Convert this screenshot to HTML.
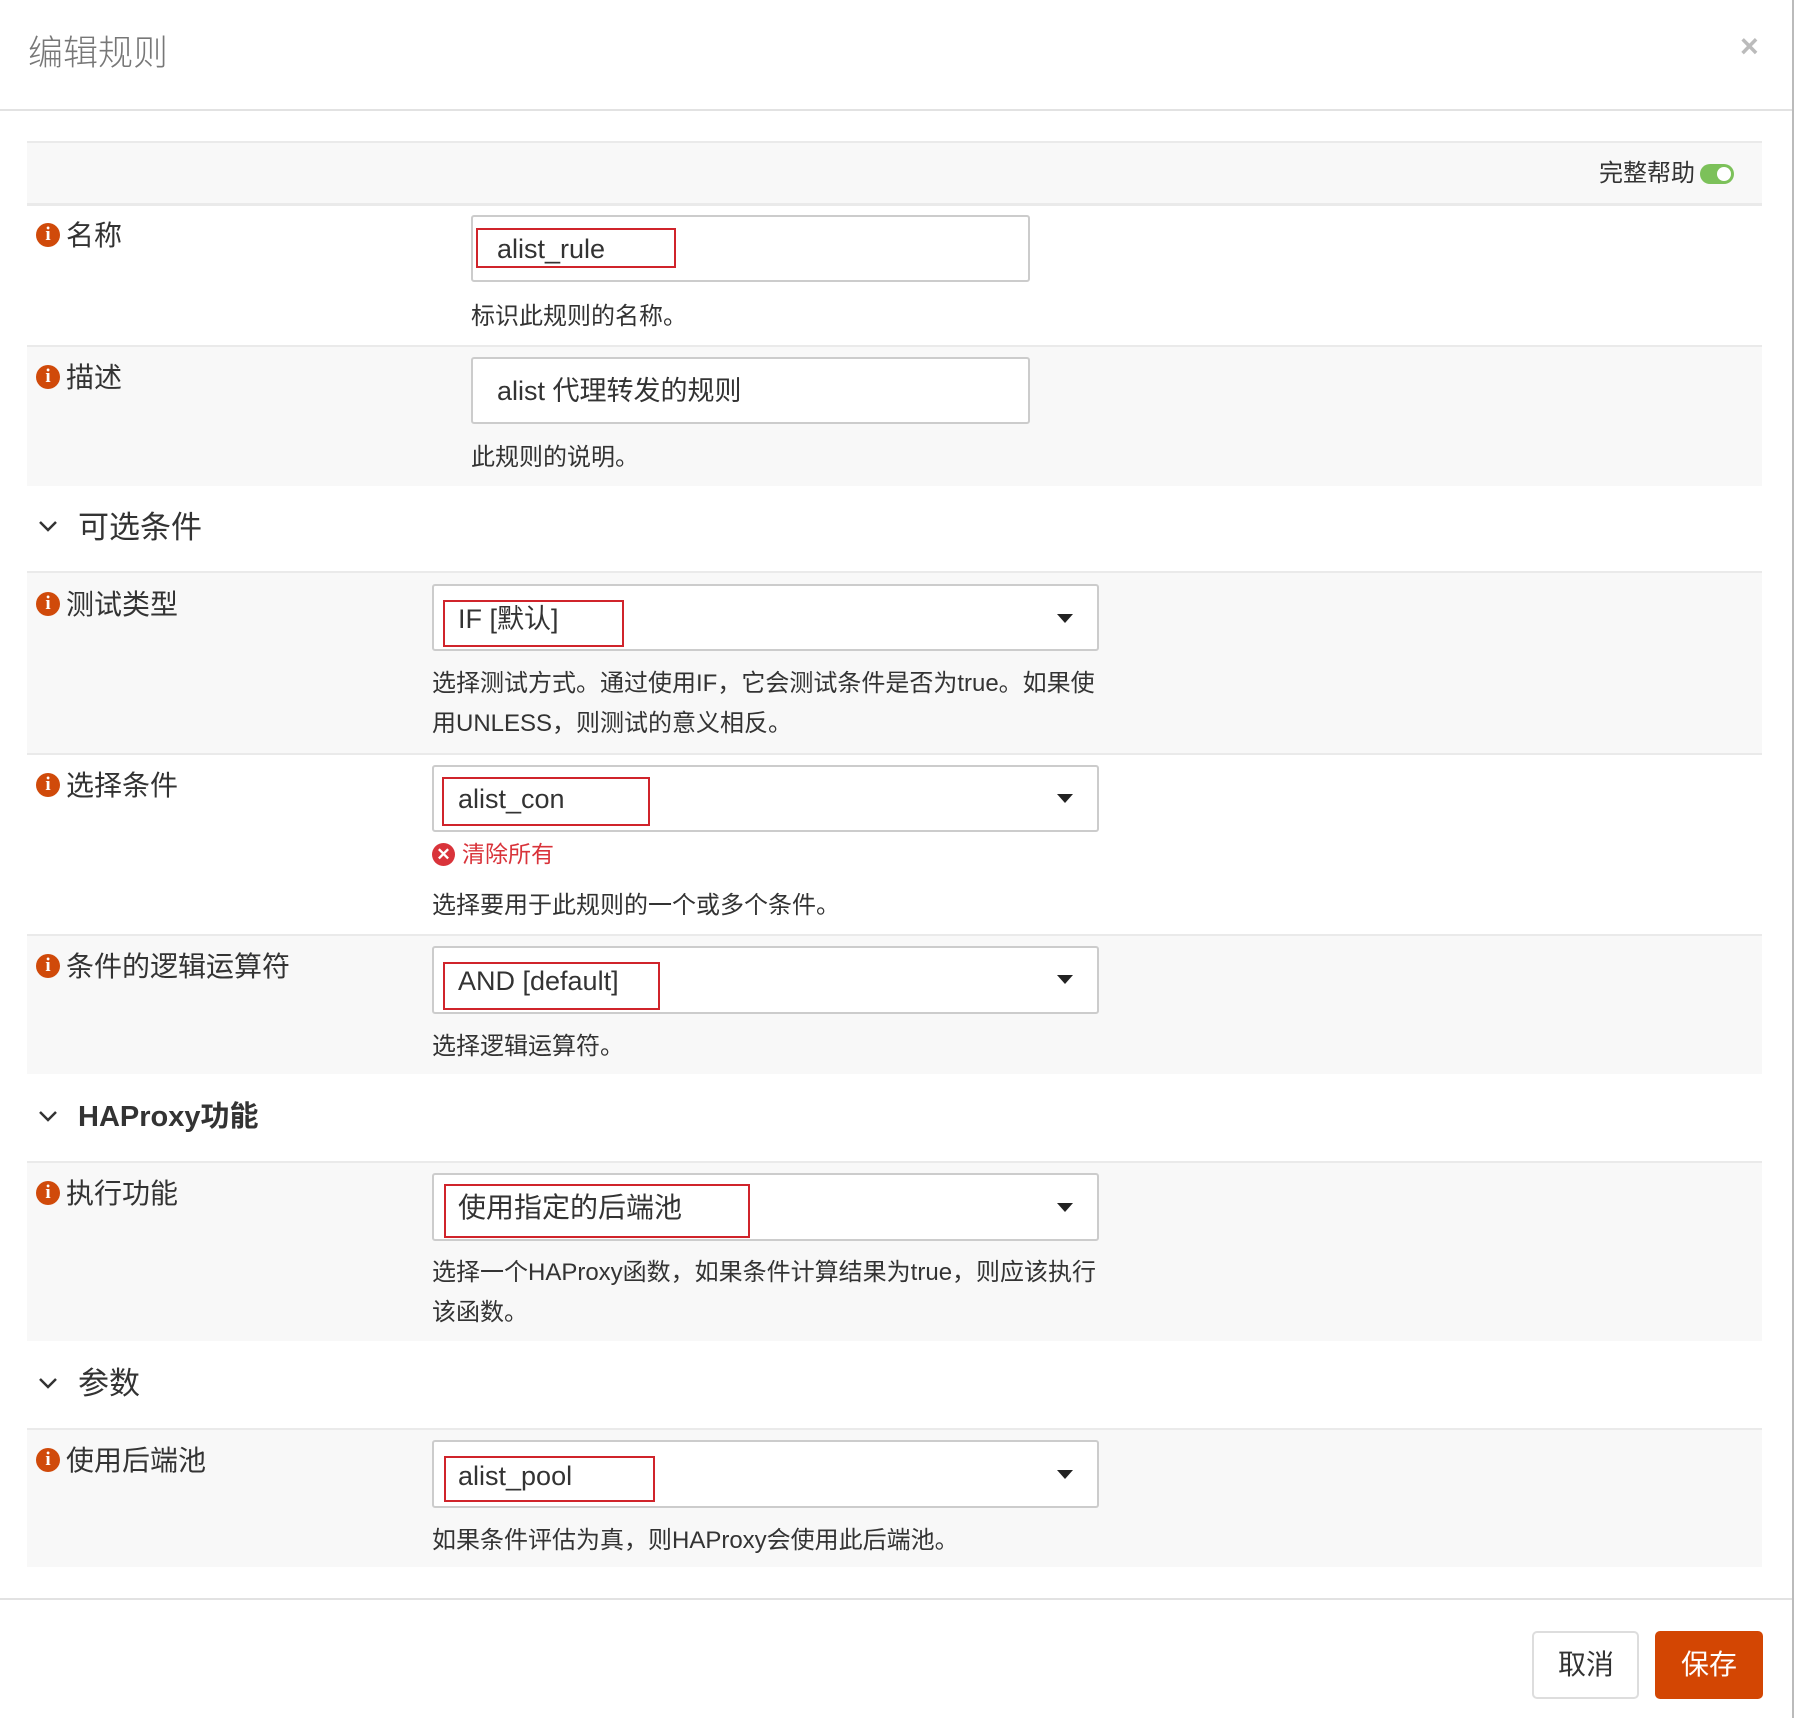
<!DOCTYPE html>
<html><head><meta charset="utf-8"><style>
*{margin:0;padding:0;box-sizing:border-box}
body{width:1794px;height:1718px;background:#fff;position:relative;overflow:hidden;font-family:"Liberation Sans","Noto Sans CJK SC",sans-serif;color:#333}
.a{position:absolute}
.t{position:absolute;white-space:nowrap;line-height:1}
.row{position:absolute;left:27px;width:1735px;border-top:2px solid #eaeaea}
.g{background:#f8f8f8}
.info{position:absolute;left:36px;width:24px;height:24px;border-radius:50%;background:#d04a0a;color:#fff;font:bold 19px/24px "Liberation Serif",serif;text-align:center}
.lbl{font-size:28px}
.help{font-size:24px}
.inp{position:absolute;background:#fff;border:2px solid #ccc;border-radius:3px}
.red{position:absolute;border:2px solid #d0242b}
.caret{position:absolute;width:0;height:0;border-left:8px solid transparent;border-right:8px solid transparent;border-top:9px solid #222}
.sec{font-size:31px}
.chev{position:absolute;left:38px}
</style></head><body>
<div class="a" style="left:1792px;top:0;width:2px;height:1718px;background:#bbb"></div>
<div class="t" style="left:28px;top:36px;font-size:35px;color:#777;font-weight:300">编辑规则</div>
<div class="t" style="left:1740px;top:30px;font-size:32px;color:#bbb;font-weight:bold">×</div>
<div class="a" style="left:0;top:109px;width:1792px;height:2px;background:#e2e2e2"></div>

<div class="row g" style="top:141px;height:64px;border-bottom:2px solid #eaeaea"></div>
<div class="t" style="left:1599px;top:162px;font-size:24px">完整帮助</div>
<div class="a" style="left:1700px;top:164px;width:34px;height:20px;border-radius:10px;background:#7cc15a"></div>
<div class="a" style="left:1717px;top:167px;width:14px;height:14px;border-radius:50%;background:#fff"></div>

<!-- 名称 -->
<div class="row" style="top:204px;height:141px;background:#fff"></div>
<div class="info" style="top:223px">i</div>
<div class="t lbl" style="left:66px;top:222px">名称</div>
<div class="inp" style="left:471px;top:215px;width:559px;height:67px"></div>
<div class="red" style="left:476px;top:228px;width:200px;height:40px"></div>
<div class="t" style="left:497px;top:236px;font-size:27px">alist_rule</div>
<div class="t help" style="left:471px;top:305px">标识此规则的名称。</div>
<!-- 描述 -->
<div class="row g" style="top:345px;height:141px"></div>
<div class="info" style="top:365px">i</div>
<div class="t lbl" style="left:66px;top:364px">描述</div>
<div class="inp" style="left:471px;top:357px;width:559px;height:67px"></div>
<div class="t" style="left:497px;top:378px;font-size:27px">alist 代理转发的规则</div>
<div class="t help" style="left:471px;top:446px">此规则的说明。</div>

<!-- section 可选条件 -->
<svg class="chev" style="top:520px" width="20" height="14"><polyline points="2,2 10,10 18,2" fill="none" stroke="#333" stroke-width="2.5"/></svg>
<div class="t sec" style="left:78px;top:512px">可选条件</div>

<div class="row g" style="top:571px;height:183px"></div>
<div class="info" style="top:592px">i</div>
<div class="t lbl" style="left:66px;top:591px">测试类型</div>
<div class="inp" style="left:432px;top:584px;width:667px;height:67px"></div>
<div class="red" style="left:443px;top:600px;width:181px;height:47px"></div>
<div class="t" style="left:458px;top:606px;font-size:27px">IF [默认]</div>
<div class="caret" style="left:1057px;top:614px"></div>
<div class="t help" style="left:432px;top:672px">选择测试方式。通过使用IF，它会测试条件是否为true。如果使</div>
<div class="t help" style="left:432px;top:712px">用UNLESS，则测试的意义相反。</div>

<div class="row" style="top:753px;height:182px;background:#fff"></div>
<div class="info" style="top:773px">i</div>
<div class="t lbl" style="left:66px;top:772px">选择条件</div>
<div class="inp" style="left:432px;top:765px;width:667px;height:67px"></div>
<div class="red" style="left:442px;top:777px;width:208px;height:49px"></div>
<div class="t" style="left:458px;top:786px;font-size:27px">alist_con</div>
<div class="caret" style="left:1057px;top:794px"></div>
<div class="a" style="left:432px;top:843px;width:23px;height:23px;border-radius:50%;background:#d9333a;color:#fff;font:bold 17px/23px sans-serif;text-align:center">✕</div>
<div class="t" style="left:462px;top:843px;font-size:23px;color:#d9333a">清除所有</div>
<div class="t help" style="left:432px;top:894px">选择要用于此规则的一个或多个条件。</div>

<div class="row g" style="top:934px;height:140px"></div>
<div class="info" style="top:954px">i</div>
<div class="t lbl" style="left:66px;top:953px">条件的逻辑运算符</div>
<div class="inp" style="left:432px;top:946px;width:667px;height:68px"></div>
<div class="red" style="left:443px;top:962px;width:217px;height:48px"></div>
<div class="t" style="left:458px;top:968px;font-size:27px">AND [default]</div>
<div class="caret" style="left:1057px;top:975px"></div>
<div class="t help" style="left:432px;top:1035px">选择逻辑运算符。</div>

<!-- HAProxy功能 -->
<svg class="chev" style="top:1110px" width="20" height="14"><polyline points="2,2 10,10 18,2" fill="none" stroke="#333" stroke-width="2.5"/></svg>
<div class="t" style="left:78px;top:1103px;font-size:29px;font-weight:bold">HAProxy功能</div>

<div class="row g" style="top:1161px;height:180px"></div>
<div class="info" style="top:1181px">i</div>
<div class="t lbl" style="left:66px;top:1180px">执行功能</div>
<div class="inp" style="left:432px;top:1173px;width:667px;height:68px"></div>
<div class="red" style="left:444px;top:1184px;width:306px;height:54px"></div>
<div class="t" style="left:458px;top:1194px;font-size:28px">使用指定的后端池</div>
<div class="caret" style="left:1057px;top:1203px"></div>
<div class="t help" style="left:432px;top:1261px">选择一个HAProxy函数，如果条件计算结果为true，则应该执行</div>
<div class="t help" style="left:432px;top:1301px">该函数。</div>

<!-- 参数 -->
<svg class="chev" style="top:1377px" width="20" height="14"><polyline points="2,2 10,10 18,2" fill="none" stroke="#333" stroke-width="2.5"/></svg>
<div class="t sec" style="left:78px;top:1368px">参数</div>

<div class="row g" style="top:1428px;height:139px"></div>
<div class="info" style="top:1448px">i</div>
<div class="t lbl" style="left:66px;top:1447px">使用后端池</div>
<div class="inp" style="left:432px;top:1440px;width:667px;height:68px"></div>
<div class="red" style="left:444px;top:1456px;width:211px;height:46px"></div>
<div class="t" style="left:458px;top:1463px;font-size:27px">alist_pool</div>
<div class="caret" style="left:1057px;top:1470px"></div>
<div class="t help" style="left:432px;top:1529px">如果条件评估为真，则HAProxy会使用此后端池。</div>

<div class="a" style="left:0;top:1598px;width:1792px;height:2px;background:#e2e2e2"></div>
<div class="a" style="left:1532px;top:1631px;width:107px;height:68px;border:2px solid #ddd;border-radius:5px;background:#fff"></div>
<div class="t" style="left:1558px;top:1651px;font-size:28px">取消</div>
<div class="a" style="left:1655px;top:1631px;width:108px;height:68px;border-radius:5px;background:#d34603"></div>
<div class="t" style="left:1681px;top:1651px;font-size:28px;color:#fff">保存</div>
</body></html>
